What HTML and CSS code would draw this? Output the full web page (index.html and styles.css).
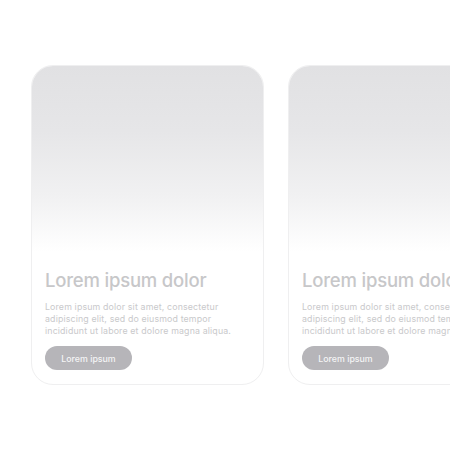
FILE: index.html
```html
<!DOCTYPE html>
<html>
<head>
<meta charset="utf-8">
<link rel="stylesheet" href="styles.css">
</head>
<body>
<div class="row">
  <div class="card">
    <div class="media"></div>
    <div class="body">
      <h2 class="title">Lorem ipsum dolor</h2>
      <p class="text">Lorem ipsum dolor sit amet, consectetur adipiscing elit, sed do eiusmod tempor incididunt ut labore et dolore magna aliqua.</p>
      <button class="btn">Lorem ipsum</button>
    </div>
  </div>
  <div class="card">
    <div class="media"></div>
    <div class="body">
      <h2 class="title">Lorem ipsum dolor</h2>
      <p class="text">Lorem ipsum dolor sit amet, consectetur adipiscing elit, sed do eiusmod tempor incididunt ut labore et dolore magna aliqua.</p>
      <button class="btn">Lorem ipsum</button>
    </div>
  </div>
</div>
</body>
</html>
```
FILE: styles.css
```css
html, body {
  margin: 0;
  padding: 0;
  background: #ffffff;
  width: 450px;
  height: 450px;
  overflow: hidden;
}
.row {
  display: flex;
  gap: 24px;
  padding: 65px 0 0 31px;
}
.card {
  flex: 0 0 233px;
  height: 320px;
  box-sizing: border-box;
  border: 1px solid #efeff0;
  border-radius: 22px;
  overflow: hidden;
  display: flex;
  flex-direction: column;
  background: #fff;
}
.media {
  height: 186px;
  background: linear-gradient(to bottom, #e1e1e3 0%, #e6e6e8 35%, #f1f1f2 70%, #ffffff 100%);
}
.body {
  padding: 16px 13px 0 13px;
  font-family: "Inter", "Lato", sans-serif;
}
.title {
  margin: 0;
  font-size: 18.5px;
  font-weight: 500;
  letter-spacing: -0.2px;
  color: #c7c7c9;
  line-height: 24px;
  white-space: nowrap;
}
.text {
  width: 190px;
  margin: 9px 0 0 0;
  font-size: 8.8px;
  line-height: 12px;
  color: #c9c9cb;
  letter-spacing: 0.15px;
  white-space: normal;
}
.btn {
  margin-top: 9px;
  width: 87px;
  height: 24px;
  border: 0;
  border-radius: 12px;
  background: #b6b5b9;
  color: #f4f4f5;
  font-family: "Inter", sans-serif;
  font-size: 8.8px;
  font-weight: 500;
  padding: 0;
}
```
